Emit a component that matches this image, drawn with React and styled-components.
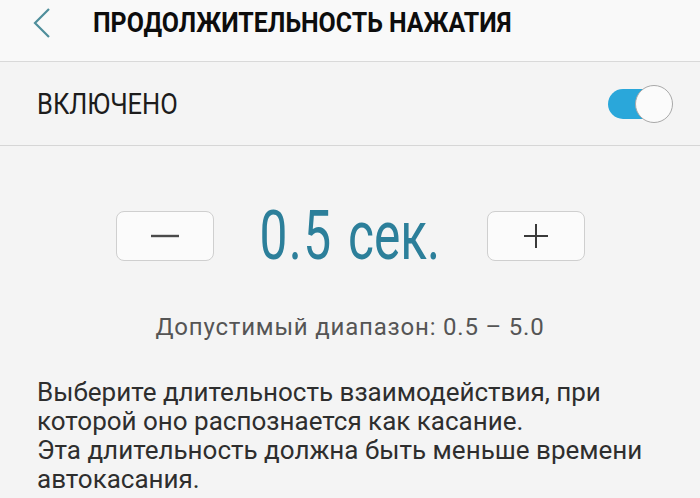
import React, { useState } from "react";
import styled, { createGlobalStyle } from "styled-components";

const GlobalStyle = createGlobalStyle`
  html, body {
    margin: 0;
    padding: 0;
    background: #f4f4f4;
    font-family: Roboto, "Noto Sans", sans-serif;
  }
`;

const Page = styled.div`
  width: 700px;
  height: 498px;
  overflow: hidden;
  background: #f4f4f4;
`;

const Header = styled.header`
  display: flex;
  align-items: center;
  box-sizing: border-box;
  height: 62px;
  padding: 0 0 16px 33px;
  background: #f9f9f9;
  border-bottom: 1px solid #d9d9d9;
`;

const BackBtn = styled.button`
  display: flex;
  align-items: center;
  padding: 0;
  border: none;
  background: none;
  cursor: pointer;
`;

const Title = styled.h1`
  margin: 0 0 0 42px;
  font-size: 28px;
  font-weight: 700;
  color: #0d0d0d;
  white-space: nowrap;
  transform: scaleX(0.89);
  transform-origin: left center;
`;

const SwitchRow = styled.div`
  display: flex;
  align-items: center;
  justify-content: space-between;
  height: 83px;
  padding: 0 27px 0 37px;
  border-bottom: 1px solid #d6d6d6;
`;

const SwitchLabel = styled.span`
  font-size: 30px;
  color: #1c1c1c;
  white-space: nowrap;
  transform: scaleX(0.85);
  transform-origin: left center;
`;

const Toggle = styled.button`
  position: relative;
  width: 65px;
  height: 38px;
  padding: 0;
  border: none;
  background: none;
  cursor: pointer;

  &::before {
    content: "";
    position: absolute;
    left: 0;
    top: 4px;
    width: 52px;
    height: 30px;
    border-radius: 15px;
    background: ${(p) => (p.$on ? "#2aa7da" : "#b9b9b9")};
  }

  &::after {
    content: "";
    position: absolute;
    top: 0;
    left: ${(p) => (p.$on ? "27px" : "0")};
    width: 36px;
    height: 36px;
    border-radius: 50%;
    background: #fbfbfb;
    border: 1px solid #a9a9a9;
  }
`;

const Stepper = styled.div`
  display: flex;
  align-items: center;
  justify-content: center;
  gap: 45px;
  margin-top: 65px;
`;

const StepBtn = styled.button`
  display: flex;
  align-items: center;
  justify-content: center;
  width: 98px;
  height: 50px;
  padding: 0;
  background: #fbfbfb;
  border: 1px solid #cfcfcf;
  border-radius: 8px;
  cursor: pointer;
`;

const ValueBox = styled.div`
  display: flex;
  justify-content: center;
  width: 183px;
  height: 50px;
  overflow: visible;
`;

const Value = styled.span`
  display: inline-block;
  font-size: 68px;
  font-weight: 400;
  line-height: 50px;
  color: #2c7f9a;
  white-space: nowrap;
  letter-spacing: 2px;
  transform: scaleX(0.73);
`;

const Unit = styled.span`
  letter-spacing: 0;
  margin-left: 4px;
`;

const Range = styled.p`
  margin: 52px 0 0;
  text-align: center;
  font-size: 24px;
  letter-spacing: 0.8px;
  color: #555;
`;

const Description = styled.p`
  margin: 37px 0 0;
  padding: 0 40px 0 37px;
  font-size: 26px;
  line-height: 29px;
  color: #2e2e2e;
`;

const Chevron = () => (
  <svg width="18" height="30" viewBox="0 0 18 30">
    <path d="M16 1 L2 15 L16 29" fill="none" stroke="#4f8e9b" strokeWidth="2.2" />
  </svg>
);

const Minus = () => (
  <svg width="28" height="4" viewBox="0 0 28 4">
    <path d="M0 2 H28" stroke="#4a4a4a" strokeWidth="2.4" />
  </svg>
);

const Plus = () => (
  <svg width="24" height="24" viewBox="0 0 24 24">
    <path d="M0 12 H24 M12 0 V24" stroke="#3a3a3a" strokeWidth="2" />
  </svg>
);

const App = () => {
  const [on, setOn] = useState(true);
  const [value, setValue] = useState(0.5);

  const step = (d) =>
    setValue((v) => Math.min(5, Math.max(0.5, Math.round((v + d) * 10) / 10)));

  return (
    <Page>
      <GlobalStyle />
      <Header>
        <BackBtn aria-label="Назад">
          <Chevron />
        </BackBtn>
        <Title>ПРОДОЛЖИТЕЛЬНОСТЬ НАЖАТИЯ</Title>
      </Header>

      <SwitchRow>
        <SwitchLabel>ВКЛЮЧЕНО</SwitchLabel>
        <Toggle $on={on} onClick={() => setOn(!on)} aria-label="Включено" />
      </SwitchRow>

      <Stepper>
        <StepBtn onClick={() => step(-0.1)} aria-label="Уменьшить">
          <Minus />
        </StepBtn>
        <ValueBox>
          <Value>
            {value.toFixed(1)}
            <Unit> сек.</Unit>
          </Value>
        </ValueBox>
        <StepBtn onClick={() => step(0.1)} aria-label="Увеличить">
          <Plus />
        </StepBtn>
      </Stepper>

      <Range>Допустимый диапазон: 0.5 – 5.0</Range>

      <Description>
        Выберите длительность взаимодействия, при
        <br />
        которой оно распознается как касание.
        <br />
        Эта длительность должна быть меньше времени автокасания.
      </Description>
    </Page>
  );
};

export default App;
